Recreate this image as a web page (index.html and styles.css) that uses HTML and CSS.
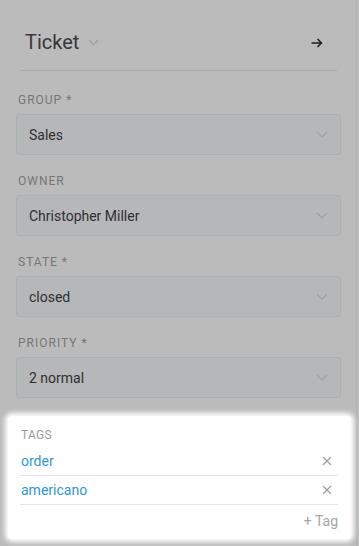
FILE: index.html
```html
<!DOCTYPE html>
<html>
<head>
<meta charset="utf-8">
<link rel="stylesheet" href="styles.css">
</head>
<body>
<aside class="sidebar">
  <header class="sidebar-head">
    <div class="title">
      <span class="title-text">Ticket</span>
      <svg class="title-caret" width="11" height="7" viewBox="0 0 11 7"><path d="M1 1l4.5 4.5L10 1" fill="none" stroke="currentColor" stroke-width="1.6"/></svg>
    </div>
    <svg class="head-arrow" width="12" height="10" viewBox="0 0 12 10"><path d="M0.5 5h10M6.5 1l4 4-4 4" fill="none" stroke="currentColor" stroke-width="1.5"/></svg>
  </header>

  <div class="fields">
    <div class="field">
      <div class="label">Group *</div>
      <div class="select"><span>Sales</span><svg class="caret" width="12" height="7" viewBox="0 0 12 7"><path d="M1 1l5 5 5-5" fill="none" stroke="currentColor" stroke-width="1.4"/></svg></div>
    </div>
    <div class="field">
      <div class="label">Owner</div>
      <div class="select"><span>Christopher Miller</span><svg class="caret" width="12" height="7" viewBox="0 0 12 7"><path d="M1 1l5 5 5-5" fill="none" stroke="currentColor" stroke-width="1.4"/></svg></div>
    </div>
    <div class="field">
      <div class="label">State *</div>
      <div class="select"><span>closed</span><svg class="caret" width="12" height="7" viewBox="0 0 12 7"><path d="M1 1l5 5 5-5" fill="none" stroke="currentColor" stroke-width="1.4"/></svg></div>
    </div>
    <div class="field">
      <div class="label">Priority *</div>
      <div class="select"><span>2 normal</span><svg class="caret" width="12" height="7" viewBox="0 0 12 7"><path d="M1 1l5 5 5-5" fill="none" stroke="currentColor" stroke-width="1.4"/></svg></div>
    </div>

    <section class="tags">
      <div class="tags-label">Tags</div>
      <ul class="tag-list">
        <li class="tag"><span class="tag-name">order</span><svg class="tag-x" width="10" height="10" viewBox="0 0 10 10"><path d="M1 1l8 8M9 1l-8 8" fill="none" stroke="currentColor" stroke-width="1.3"/></svg></li>
        <li class="tag"><span class="tag-name">americano</span><svg class="tag-x" width="10" height="10" viewBox="0 0 10 10"><path d="M1 1l8 8M9 1l-8 8" fill="none" stroke="currentColor" stroke-width="1.3"/></svg></li>
      </ul>
      <div class="tag-add">+ Tag</div>
    </section>
  </div>
</aside>
</body>
</html>
```

FILE: styles.css
```css
* { box-sizing: border-box; }
html, body { margin: 0; padding: 0; }
body {
  background: #bbbbbb;
  font-family: Roboto, "Noto Sans", sans-serif;
  width: 359px;
  height: 546px;
  overflow: hidden;
}
.sidebar {
  width: 357px;
  height: 546px;
  border-right: 1px solid #b3b3b3;
  padding: 0 15px 0 16px;
}
.sidebar-head {
  margin: 0 4px;
  height: 71px;
  padding: 22px 14px 0 5px;
  border-bottom: 1px solid #a9a9a9;
  display: flex;
  align-items: flex-start;
  justify-content: space-between;
}
.title {
  display: flex;
  align-items: center;
  gap: 9px;
  height: 40px;
}
.title-text {
  font-size: 20px;
  color: #36393c;
  line-height: 40px;
}
.title-caret { color: #a3a3a3; margin-top: 1px; }
.head-arrow { color: #1f1f1f; margin-top: 16px; }
.fields { padding-top: 21px; }
.field { margin-bottom: 18px; }
.label {
  font-size: 12px;
  line-height: 16px;
  letter-spacing: 1px;
  text-transform: uppercase;
  color: #767676;
  padding-left: 2px;
  margin-bottom: 6px;
}
.select {
  height: 41px;
  border: 1px solid #adaeaf;
  border-radius: 3px;
  background: #b6b7b9;
  display: flex;
  align-items: center;
  justify-content: space-between;
  padding: 0 12px 0 12px;
  font-size: 14px;
  color: #2e3032;
}
.caret { color: #a1a2a4; }
.tags {
  position: relative;
  margin: 0 -10px 0 -8px;
  padding: 11px 13px 10px 13px;
  background: #ffffff;
  border-radius: 4px;
  box-shadow: 0 0 5px 3px #ffffff;
}
.tags-label {
  font-size: 12px;
  line-height: 16px;
  text-transform: uppercase;
  color: #9c9c9c;
  letter-spacing: 0.3px;
}
.tag-list { list-style: none; margin: 4px 0 0 -1px; padding: 0; }
.tag {
  height: 29px;
  border-bottom: 1px solid #e5e5e5;
  display: flex;
  align-items: center;
  justify-content: space-between;
  padding: 0 6px 0 1px;
}
.tag-name { font-size: 14px; color: #2d97e0; }
.tag-x { color: #a0a0a0; }
.tag-add {
  text-align: right;
  font-size: 14px;
  line-height: 16px;
  color: #a5a5a5;
  margin-top: 8px;
}
```
